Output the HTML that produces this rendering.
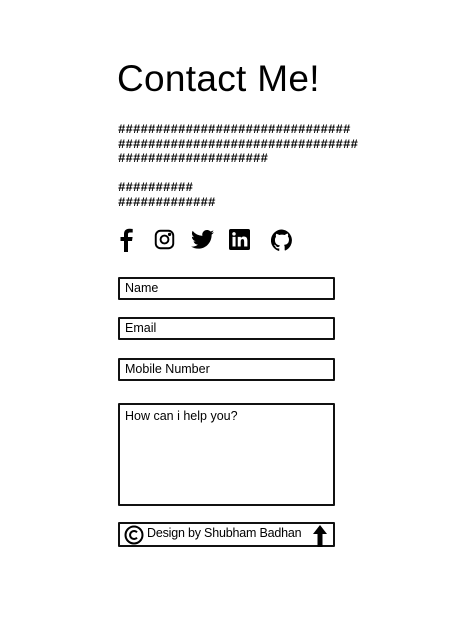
<!DOCTYPE html>
<html><head><meta charset="utf-8"><style>
body{margin:0;background:#fff;width:456px;height:617px;position:relative;font-family:"Liberation Sans",sans-serif;color:#000;overflow:hidden}
.a{position:absolute}
h1{position:absolute;left:117px;top:58px;margin:0;font-size:37px;font-weight:normal;letter-spacing:0.3px}
.h{position:absolute;left:118px;font-family:"Liberation Mono",monospace;font-size:12.5px;line-height:14.5px;font-weight:bold;white-space:pre}
.box{position:absolute;left:118px;border:2px solid #111;border-radius:1px;font-size:12.5px;padding-left:5px;box-sizing:border-box;width:217px}
svg{position:absolute}
</style></head><body>
<h1>Contact Me!</h1>
<div class="h" style="top:123px">###############################
################################
####################</div>
<div class="h" style="top:181px">##########
#############</div>
<svg style="left:118px;top:228px" width="16" height="24" viewBox="0 0 16 24"><path d="M10 24V13h4l.6-4H10V6.5c0-1.2.4-2 2-2h2.7V1c-.5 0-2-.2-3.6-.2C7.8.8 6 2.8 6 6.2V9H2.5v4H6v11z"/></svg>
<svg style="left:154px;top:229px" width="21" height="21" viewBox="0 0 24 24" fill="none" stroke="#000" stroke-width="2.2"><rect x="2" y="2" width="20" height="20" rx="5.5"/><circle cx="12" cy="12" r="4.5"/><circle cx="17.8" cy="6.2" r=".8" fill="#000"/></svg>
<svg style="left:191px;top:229px" width="23" height="21" viewBox="0 0 24 20"><path d="M24 2.4c-.9.4-1.8.7-2.8.8 1-.6 1.8-1.6 2.2-2.7-1 .6-2 1-3.1 1.2A4.9 4.9 0 0 0 11.9 6.2 14 14 0 0 1 1.7 1 4.9 4.9 0 0 0 3.200 7.6c-.8 0-1.6-.3-2.2-.6 0 2.4 1.7 4.4 3.9 4.800-.7.2-1.5.2-2.2.1.6 2 2.4 3.4 4.6 3.4A9.9 9.9 0 0 1 0 17.3 14 14 0 0 0 7.5 19.5c9.1 0 14-7.5 14-14v-.6c1-.7 1.8-1.6 2.5-2.5z"/></svg>
<svg style="left:229px;top:229px" width="21" height="21" viewBox="0 0 24 24"><path d="M2 0h20a2 2 0 0 1 2 2v20a2 2 0 0 1-2 2H2a2 2 0 0 1-2-2V2a2 2 0 0 1 2-2zM4 9v11h3.5V9zM5.7 3.5a2 2 0 1 0 0 4 2 2 0 0 0 0-4zM10 9v11h3.4v-5.5c0-1.5.3-2.9 2.1-2.9s1.8 1.7 1.8 3V20H21v-6.2c0-3-.7-5.2-4.1-5.2-1.7 0-2.8.9-3.3 1.8V9z" fill="#000"/></svg>
<svg style="left:271px;top:229px" width="22" height="22" viewBox="0 0 24 24"><path d="M12 .5a12 12 0 0 0-3.8 23.4c.6.1.8-.3.8-.6v-2.2c-3.3.7-4-1.4-4-1.4-.6-1.4-1.4-1.8-1.4-1.8-1-.7.1-.7.1-.7 1.2.1 1.8 1.2 1.800 1.2 1 1.8 2.8 1.3 3.5 1 .1-.8.4-1.3.8-1.6-2.7-.3-5.5-1.3-5.5-6 0-1.3.5-2.4 1.2-3.2-.1-.3-.5-1.5.1-3.2 0 0 1-.3 3.3 1.2a11.5 11.5 0 0 1 6 0C17.3 4.7 18.3 5 18.3 5c.7 1.7.3 2.9.1 3.2.8.8 1.2 1.9 1.2 3.2 0 4.6-2.8 5.6-5.5 5.9.4.4.8 1.1.8 2.2v3.3c0 .3.2.7.8.6A12 12 0 0 0 12 .5z"/></svg>
<div class="box" style="top:277px;height:23px;line-height:19px">Name</div>
<div class="box" style="top:317px;height:23px;line-height:19px">Email</div>
<div class="box" style="top:358px;height:23px;line-height:19px">Mobile Number</div>
<div class="box" style="top:403px;height:103px;padding-top:4px">How can i help you?</div>
<div class="box" style="top:522px;height:25px;padding-left:4px">
<svg style="left:4px;top:1px" width="20" height="20" viewBox="0 0 20 20" fill="none" stroke="#000" stroke-width="2"><circle cx="10" cy="10" r="8.5"/><path d="M13 7.3a4 4 0 1 0 0 5.4"/></svg>
<span class="a" style="left:27px;top:2px;font-size:12.5px;letter-spacing:-0.2px">Design by Shubham Badhan</span>
<svg style="left:192px;top:1px" width="16" height="22" viewBox="0 0 16 22"><path d="M8 0L1 9h4.5v13h5V9H15z"/></svg>
</div>
</body></html>
